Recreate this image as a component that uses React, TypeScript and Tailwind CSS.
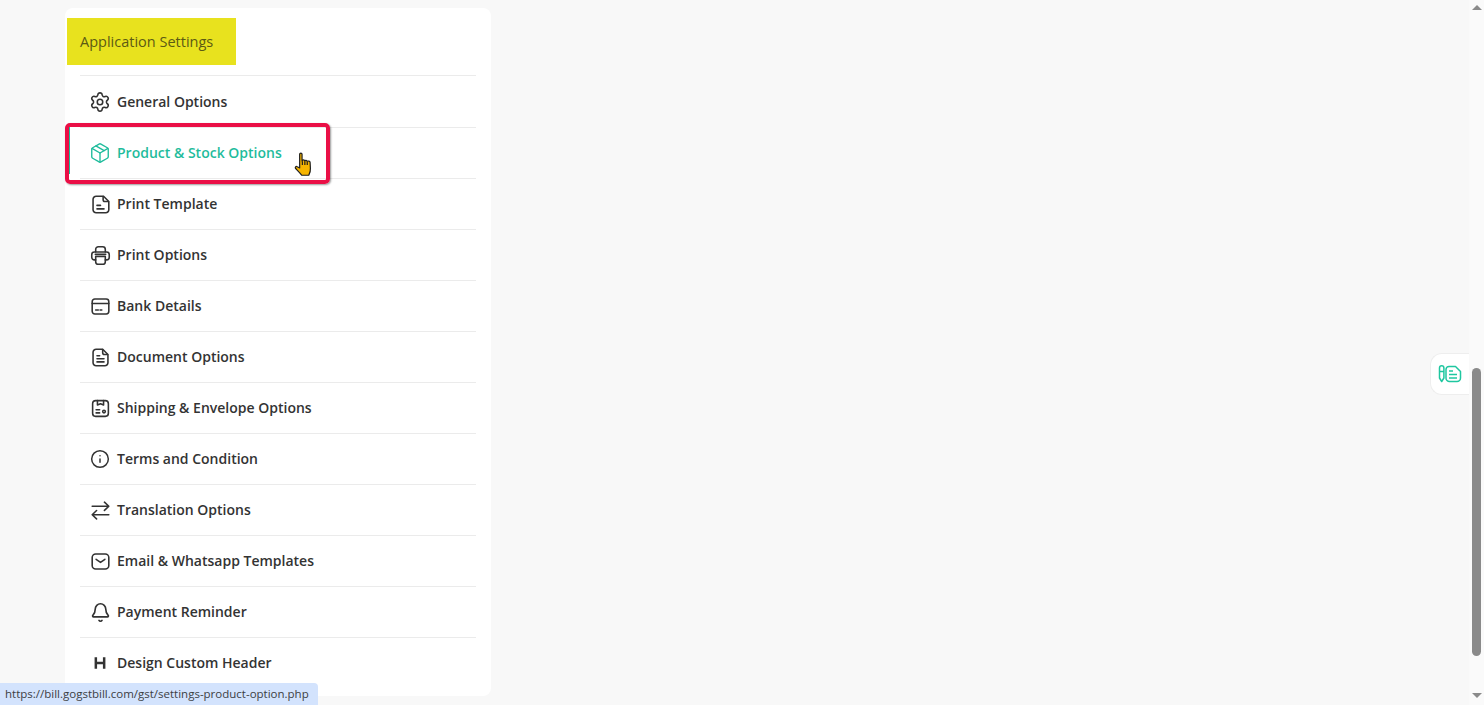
import { ReactNode } from 'react';
import { Settings, Package, Info, Bell } from 'lucide-react';

function Svg({ children }: { children: ReactNode }) {
  return (
    <svg width="21" height="21" viewBox="0 0 24 24" fill="none" stroke="currentColor" strokeWidth="1.8" strokeLinecap="round" strokeLinejoin="round">
      {children}
    </svg>
  );
}

function TemplateIcon() {
  return (
    <Svg>
      <path d="M7 2.500h8.500l6 6V18a3.500 3.500 0 0 1-3.500 3.500H7A3.500 3.500 0 0 1 3.500 18V6A3.500 3.500 0 0 1 7 2.500z" />
      <path d="M15 3v3.500a2 2 0 0 0 2 2h4" />
      <path d="M8 13h4M8 17h8" />
    </Svg>
  );
}

function PrinterIcon() {
  return (
    <Svg>
      <path d="M6.500 8V5a3 3 0 0 1 3-3h5a3 3 0 0 1 3 3v3" />
      <path d="M6.500 17H5a3 3 0 0 1-3-3v-3a3 3 0 0 1 3-3h14a3 3 0 0 1 3 3v3a3 3 0 0 1-3 3h-1.500" />
      <path d="M6.500 13h11v6a3 3 0 0 1-3 3h-5a3 3 0 0 1-3-3z" />
      <path d="M6 10.500h12" />
    </Svg>
  );
}

function CardIcon() {
  return (
    <Svg>
      <rect x="2.500" y="3.500" width="19" height="17" rx="3" />
      <path d="M2.500 8.500h19M6.500 16h3M11.500 16h2" />
    </Svg>
  );
}

function DocIcon() {
  return (
    <Svg>
      <path d="M7 2.500h7.500l6 6V18a3.500 3.500 0 0 1-3.500 3.500H7A3.500 3.500 0 0 1 3.500 18V6A3.500 3.500 0 0 1 7 2.500z" />
      <path d="M14.500 3v3.500a2 2 0 0 0 2 2h3.500" />
      <path d="M8 10h3M8 13.500h8M8 17h8" />
    </Svg>
  );
}

function ShippingIcon() {
  return (
    <Svg>
      <rect x="3" y="3" width="18" height="18" rx="3.500" />
      <path d="M8.500 3v5l3.500-1.500L15.500 8V3" />
      <path d="M7 13.500h4M7 17h4" />
      <circle cx="16" cy="15.500" r="1.500" />
    </Svg>
  );
}

function SwapIcon() {
  return (
    <Svg>
      <path d="M2.500 7.200h19M16.500 2.500l5 4.700-5 4.700M21.500 16.800h-19M7.500 12l-5 4.800 5 4.800" />
    </Svg>
  );
}

function MailIcon() {
  return (
    <Svg>
      <rect x="2.500" y="3.500" width="19" height="17" rx="4" />
      <path d="m7 9.500 5 3.500 5-3.500" />
    </Svg>
  );
}

function HeadingIcon() {
  return (
    <svg width="20" height="20" viewBox="0 0 24 24" fill="none" stroke="currentColor" strokeWidth="3">
      <path d="M7 5v14M17 5v14M7 12h10" />
    </svg>
  );
}

function HandCursor() {
  return (
    <svg width="20" height="25" viewBox="0 0 17 23" fill="#f7b500" stroke="#1f1f1f" strokeWidth="1.100" strokeLinejoin="round">
      <path d="M4.500 2c0-1.300 2.200-1.300 2.200 0v6.200l.3-.2c.3-1 2-1 2.200.2.500-.8 2-.6 2.200.4.600-.6 2.600-.3 2.700.8l.3 5.600c.2 2.500-.5 4.500-1.500 6.400H6.500C5 19.500 3 17.500 .8 15.200c-.9-1.100.3-2.400 1.500-1.600l2.200 1.100z" />
      <path d="M7 8.500V12M9.300 8.500V12M11.500 9v3" fill="none" />
    </svg>
  );
}

function NotesIcon() {
  return (
    <svg width="24" height="18" viewBox="0 0 24 18" fill="none" stroke="#1fc7a0" strokeWidth="1.500" strokeLinejoin="round">
      <path d="M1.500 3a2.200 2.200 0 0 1 4.400 0v10l-2.200 3.500L1.500 13zM1.500 6.500h4.400" />
      <path d="M11 1.500h6.500l5 5V13a3.500 3.500 0 0 1-3.500 3.500h-7.500A3.500 3.500 0 0 1 8 13V4.500a3 3 0 0 1 3-3z" />
      <path d="M11 6h4M11 9.500h8M11 13h8" />
    </svg>
  );
}

const items = [
  { label: 'General Options', icon: <Settings size={22} strokeWidth={1.7} /> },
  { label: 'Product & Stock Options', icon: <Package size={22} strokeWidth={1.5} />, active: true },
  { label: 'Print Template', icon: <TemplateIcon /> },
  { label: 'Print Options', icon: <PrinterIcon /> },
  { label: 'Bank Details', icon: <CardIcon /> },
  { label: 'Document Options', icon: <DocIcon /> },
  { label: 'Shipping & Envelope Options', icon: <ShippingIcon /> },
  { label: 'Terms and Condition', icon: <Info size={20} strokeWidth={1.8} /> },
  { label: 'Translation Options', icon: <SwapIcon /> },
  { label: 'Email & Whatsapp Templates', icon: <MailIcon /> },
  { label: 'Payment Reminder', icon: <Bell size={21} strokeWidth={1.9} /> },
  { label: 'Design Custom Header', icon: <HeadingIcon /> },
];

export default function App() {
  return (
    <div className="relative flex h-[705px] overflow-hidden bg-[#f8f8f8] font-['Open_Sans',sans-serif]">
      <main className="flex-1 pl-[65px] pt-2">
        <div className="h-[688px] w-[426px] overflow-hidden rounded-lg bg-white pt-[10px]">
          <div className="ml-[2px] flex h-[47px] w-[169px] items-center bg-[#e8e21e] pl-[13px] text-[14.5px] text-[#5c5a14]">
            Application Settings
          </div>

          <ul className="mx-[15px] mt-[10px]">
            {items.map((item) => (
              <li
                key={item.label}
                className={`flex h-[51px] items-center gap-[7px] border-t border-[#ebebeb] pl-[10px] text-sm font-semibold first:h-[52px] first:pt-px ${item.active ? 'text-[#1fbc9c]' : 'text-[#333]'}`}
              >
                <span className="flex w-5 justify-center [&>svg]:shrink-0">{item.icon}</span>
                {item.label}
              </li>
            ))}
          </ul>
        </div>
      </main>

      {/* scrollbar */}
      <div className="flex w-[15px] flex-col items-center bg-[#fafafa]">
        <div className="mt-[5px] size-0 border-x-[5px] border-b-[5px] border-x-transparent border-b-[#8a8a8a]" />
        <div className="mt-[358px] h-[288px] w-[9px] rounded-full bg-[#8a8a8a]" />
        <div className="mt-[37px] size-0 border-x-[5px] border-t-[5px] border-x-transparent border-t-[#8a8a8a]" />
      </div>

      {/* floating notes tab */}
      <div className="absolute left-[1430px] top-[353px] flex h-[42px] w-[39px] items-center justify-center rounded-l-xl border border-r-0 border-[#eeeeee] bg-white">
        <NotesIcon />
      </div>

      {/* red highlight from the annotation */}
      <div className="absolute left-[65px] top-[123px] h-[61px] w-[265px] rounded-[5px] border-[4px] border-[#ea0f46] shadow-[1px_1px_2px_rgba(0,0,0,0.4)]" />
      <div className="absolute left-[69px] top-[127px] h-[47px] w-px bg-[#1fbc9c]" />
      <div className="absolute left-[294px] top-[152px]">
        <HandCursor />
      </div>

      {/* browser status bubble */}
      <div className="absolute bottom-0 left-0 flex h-[22px] w-[318px] items-center rounded-tr-[4px] bg-[#d3e3fd] pl-[5px] text-[11.5px] whitespace-nowrap text-[#3c4043]">
        https://bill.gogstbill.com/gst/settings-product-option.php
      </div>
    </div>
  );
}
